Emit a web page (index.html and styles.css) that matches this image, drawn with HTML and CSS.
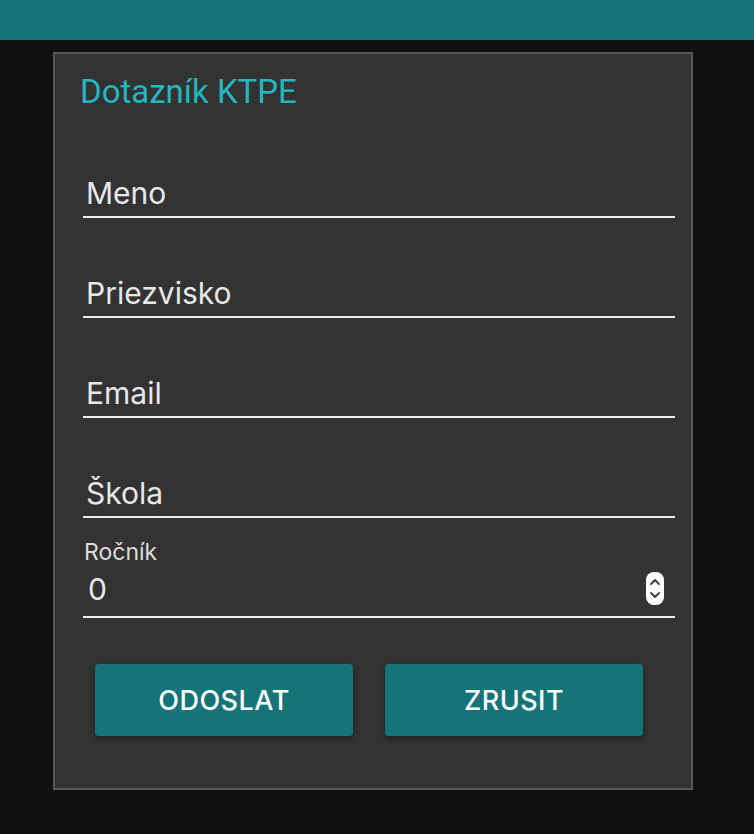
FILE: index.html
```html
<!DOCTYPE html>
<html lang="sk">
<head>
<meta charset="utf-8">
<title>Dotazník KTPE</title>
<link rel="stylesheet" href="styles.css">
</head>
<body>
<header class="topbar"></header>
<main class="page">
  <form class="card">
    <h1 class="title">Dotazník KTPE</h1>
    <div class="field"><span class="placeholder">Meno</span></div>
    <div class="field"><span class="placeholder">Priezvisko</span></div>
    <div class="field"><span class="placeholder">Email</span></div>
    <div class="field"><span class="placeholder">Škola</span></div>
    <div class="field field-number">
      <span class="label">Ročník</span>
      <div class="value-row">
        <span class="value">0</span>
        <svg class="spinner" width="18" height="33" viewBox="0 0 18 33" aria-hidden="true">
          <rect x="0" y="0" width="18" height="33" rx="8" ry="8" fill="#ffffff"/>
          <path d="M5 12 L9 8 L13 12" fill="none" stroke="#444" stroke-width="2" stroke-linecap="round" stroke-linejoin="round"/>
          <path d="M5 21 L9 25 L13 21" fill="none" stroke="#444" stroke-width="2" stroke-linecap="round" stroke-linejoin="round"/>
        </svg>
      </div>
    </div>
    <div class="actions">
      <button type="button" class="btn">ODOSLAT</button>
      <button type="button" class="btn">ZRUSIT</button>
    </div>
  </form>
</main>
</body>
</html>
```
FILE: styles.css
```css
html, body {
  margin: 0;
  padding: 0;
  background: #111111;
}
body {
  font-family: Inter, "Noto Sans", "DejaVu Sans", sans-serif;
  width: 754px;
  height: 834px;
  overflow: hidden;
}
.topbar {
  height: 40px;
  background: #147478;
}
.page {
  padding: 12px 0 0 53px;
}
.card {
  box-sizing: border-box;
  width: 640px;
  height: 738px;
  background: #333333;
  border: 2px solid #575757;
  padding: 20px 16px 0 0;
  display: flex;
  flex-direction: column;
}
.title {
  margin: 0 0 8px 25px;
  font-family: Roboto, "Liberation Sans", sans-serif;
  font-weight: 400;
  font-size: 33px;
  line-height: 36px;
  color: #25b7bf;
}
.field {
  box-sizing: border-box;
  height: 100px;
  margin-left: 28px;
  border-bottom: 2px solid #eeeeee;
  display: flex;
  flex-direction: column;
  justify-content: flex-end;
  padding: 0 0 6px 3px;
}
.placeholder {
  font-size: 30px;
  line-height: 34px;
  color: #e8e8e8;
}
.field-number {
  padding: 0 11px 10px 1px;
}
.label {
  font-size: 23px;
  line-height: 24px;
  color: #dddddd;
  margin-bottom: 8px;
}
.value-row {
  display: flex;
  align-items: center;
  justify-content: space-between;
}
.value {
  font-size: 30px;
  line-height: 34px;
  color: #e8e8e8;
  padding-left: 4px;
}
.spinner {
  display: block;
  margin-top: -1px;
}
.actions {
  display: flex;
  gap: 32px;
  margin: 46px 0 0 40px;
}
.btn {
  width: 258px;
  height: 72px;
  border: none;
  border-radius: 4px;
  background: #147478;
  color: #ffffff;
  font-family: Inter, "Noto Sans", sans-serif;
  font-weight: 500;
  font-size: 27px;
  letter-spacing: 0.5px;
  box-shadow: 0 3px 6px rgba(0, 0, 0, 0.35);
  padding: 0;
}
```
